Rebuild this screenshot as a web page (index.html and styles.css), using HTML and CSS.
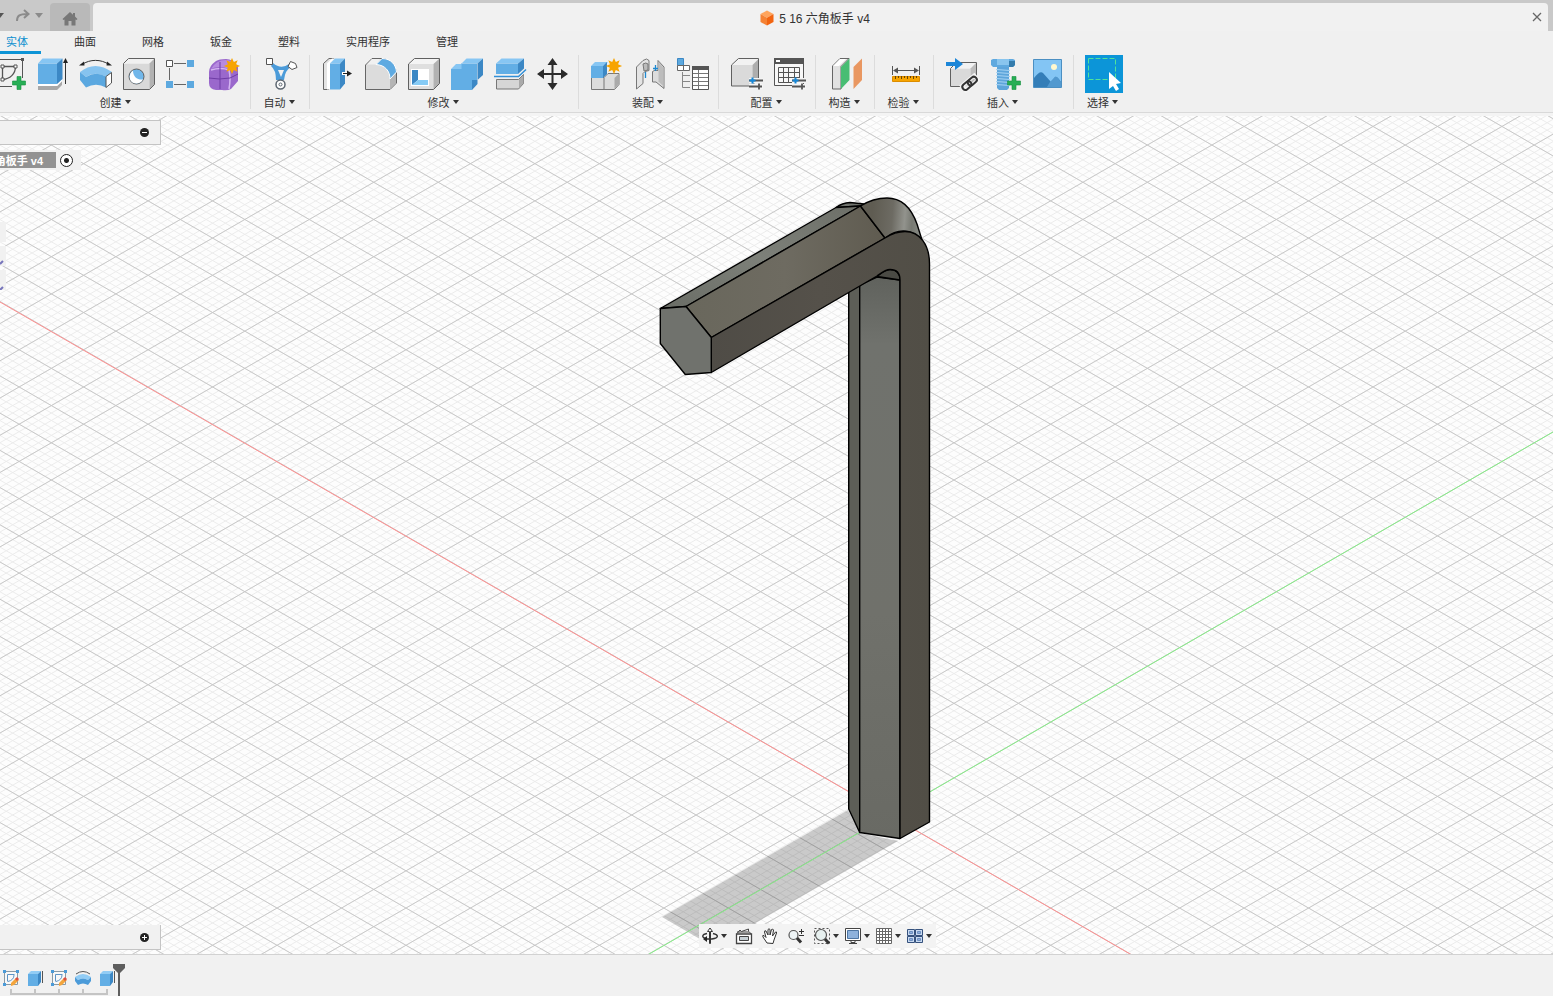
FILE: index.html
```html
<!DOCTYPE html>
<html lang="zh-CN">
<head>
	<meta charset="UTF-8">
	<title>5 16 六角板手 v4</title>
	<link rel="stylesheet" href="styles.css">
</head>
<body>
<svg class="defs" width="0" height="0" aria-hidden="true">
	<defs>
		<symbol id="star" viewBox="-10 -10 20 20"><path fill="#f7a400" d="M0-9 2-4.5 6.3-6.3 4.5-2 9 0 4.500 2 6.300 6.300 2 4.500 0 9-2 4.500-6.300 6.300-4.500 2-9 0-4.500-2-6.300-6.300-2-4.500z"/></symbol>
		<symbol id="plus" viewBox="0 0 14 14"><path fill="#27ae55" stroke="#159040" stroke-width=".6" d="M5 .5h4V5h4.500v4H9v4.500H5V9H.500V5H5z"/></symbol>
		<symbol id="sliders" viewBox="0 0 16 14"><path fill="none" stroke="#f4f4f4" stroke-width="5" d="M1 4.500h14M1 10.500h14"/><path fill="none" stroke="#555" stroke-width="1.800" d="M1 4.500h14M1 10.500h13M11 7.500v6"/><path fill="none" stroke="#1587d8" stroke-width="2" d="M1.500 4.500h6M4.500 1.500v6"/></symbol>
	</defs>
</svg>
<div class="app">
	<!-- 标题栏 -->
	<header class="titlebar">
		<div class="quick">
			<button class="drop dark" aria-label="撤消列表"></button>
			<button class="redo" aria-label="重做"><svg width="14" height="13" viewBox="0 0 14 13"><path fill="none" stroke="#8b8b8b" stroke-width="2" d="M1 12C1 6.500 4 5 11 5M8 1l4.500 4L8 9"/></svg></button>
			<button class="drop" aria-label="重做列表"></button>
		</div>
		<button class="home" aria-label="主页"><svg width="16" height="14" viewBox="0 0 16 14"><path fill="#777" d="M8 0 11 2.800V1h2v3.500l2.500 2.500-1 1-1-.6V13.500H9.500V9h-3v4.500h-4V7.400l-1 .6-1-1z"/></svg></button>
		<div class="doc">
			<h1 class="doc-title">
				<svg width="14" height="16" viewBox="0 0 14 16"><path fill="#ffa45c" d="M7 .5 13.500 4 7 7.800.500 4z"/><path fill="#f58233" d="M.500 4 7 7.800V15.500L.500 12z"/><path fill="#f26410" d="M13.500 4 7 7.800V15.500L13.500 12z"/></svg>
				<span>5 16 六角板手 v4</span>
			</h1>
			<button class="close" aria-label="关闭"><svg width="10" height="10" viewBox="0 0 10 10"><path stroke="#666" stroke-width="1.300" d="M1 1l8 8M9 1 1 9"/></svg></button>
		</div>
	</header>

	<!-- 功能区选项卡 -->
	<nav class="tabs">
		<button class="tab active">实体</button>
		<button class="tab">曲面</button>
		<button class="tab">网格</button>
		<button class="tab">钣金</button>
		<button class="tab">塑料</button>
		<button class="tab">实用程序</button>
		<button class="tab">管理</button>
	</nav>

	<!-- 功能区 -->
	<div class="ribbon">
		<section class="group">
			<div class="icons">
				<button class="tool" aria-label="创建草图"><svg viewBox="0 0 32 32"><g fill="none" stroke="#555"><path d="M5 1.500h24.500V20M5 1.500v27h14"/><path stroke-width="1.300" d="M9.500 8.500h13M9.500 8.500v13M22.500 8.500C22.500 16 17 21 9.500 21.500"/></g><path fill="#555" d="M28 0h3v3h-3z"/><path fill="#fff" stroke="#555" d="M8 7h3v3H8zM21 7h3v3h-3zM8 20h3v3H8z"/><use href="#plus" x="19" y="18" width="14" height="14"/></svg></button>
				<button class="tool" aria-label="拉伸"><svg viewBox="0 0 32 32"><path fill="#a8a8a8" d="M2 28h19l5-5v4l-5 5H2z"/><path fill="#fff" d="M2 26h19l5-5v2l-5 5H2z"/><path fill="#62aee5" d="M2 5.500h19V26H2z"/><path fill="#87c6f3" d="M2 5.500 6.500.500h20L21 5.500z"/><path fill="#3c88c5" d="m21 5.500 5.500-5v20.500L21 26z"/><path stroke="#333" d="M29.500 3v23"/><path fill="#222" d="m29.500 0 2.500 5h-5z"/></svg></button>
				<button class="tool" aria-label="旋转"><svg viewBox="0 0 32 32"><path fill="none" stroke="#333" d="M3 6.500C11 1 22 1 30 6.500"/><path fill="#222" d="m0 7.500 5-4 .500 4zM33 7.500l-5-4-.500 4z"/><path fill="#86c3ef" d="M1 14Q16 2 33 14l-6 4.500Q16 13 7 19z"/><path fill="#5ba8e0" d="M1 14 7 19v10.500L1 22zM7 19q10-6 20-.500V29.500q-10-5.500-20 0z"/><path fill="#fff" stroke="#555" d="m27 18.500 5.500-4V25L27 29.500z"/></svg></button>
				<button class="tool" aria-label="孔"><svg viewBox="0 0 32 32"><path fill="#d9d9d9" d="M1.500 5.500h26v26h-26z"/><path fill="#f1f1f1" d="m1.500 5.500 5-5h26l-5 5z"/><path fill="#b2b2b2" d="m27.500 5.500 5-5v26l-5 5z"/><path fill="none" stroke="#606060" d="M1.500 5.500 6.500.500h26v26l-5 5h-26z"/><circle cx="14.500" cy="18.500" r="7.500" fill="#71b7ea" stroke="#606060"/><path fill="#fff" d="M11 12.500c0 6 4 9.500 10 9-2 4-7 5-10.500 3C6.500 22 7 15 11 12.500z"/></svg></button>
				<button class="tool" aria-label="矩形阵列"><svg viewBox="0 0 32 32"><path fill="none" stroke="#666" d="M9 5.500h12M4.500 10v12M9 26.500h12"/><path fill="#fff" stroke="#555" d="M1.500 2.500h6v6h-6z"/><path fill="#5da9df" d="M22 2h7v7h-7zM1 23h7v7H1zM22 23h7v7h-7z"/></svg></button>
				<button class="tool" aria-label="创建形状"><svg viewBox="0 0 32 32"><path fill="#9a68cc" d="M1 14Q1 8 8 3q3-2 10-2 7 0 12 8v14l-7 8q-4 2-9 1H8Q1 31 1 25z"/><path fill="#b78ae0" d="M3 11Q8 2 18 2q6 0 8 4l-4 5Q10 7 3 11z"/><path fill="none" stroke="#d4b5f2" stroke-width="1.500" d="M3 12q10-3 18 0l6-6M21 12q2 9 0 19"/><path fill="none" stroke="#6e3ca5" d="M1 20q10 2 21 0l8-4M12 4v27"/><use href="#star" x="15" y="-1" width="18" height="18"/></svg></button>
			</div>
			<button class="label">创建</button>
		</section>
		<section class="group">
			<div class="icons">
				<button class="tool" aria-label="自动"><svg viewBox="0 0 32 32"><path fill="#4b9bd9" d="M8 5q8 7 16 1l2 3q-6 3-7 13h-8Q11 12 6 8z"/><path fill="#f1f1f1" d="M13 12h6l-3 7z"/><circle cx="15.500" cy="26.500" r="4.500" fill="#fff" stroke="#5c6670" stroke-width="1.500"/><circle cx="15.500" cy="26.500" r="1.500" fill="none" stroke="#5c6670"/><path fill="#fff" stroke="#555" d="M1.500.500h6v6h-6zM25.500 3.500l5 2 1.500 4-5 2-4-3z"/></svg></button>
			</div>
			<button class="label">自动</button>
		</section>
		<section class="group">
			<div class="icons">
				<button class="tool" aria-label="按拉"><svg viewBox="0 0 32 32"><path fill="#e4e4e4" stroke="#666" d="M2.500 5.500 8 .500h5l-5 5v26H2.500z"/><path fill="#fff" d="M6 5.500 11 .500h3l-5 5v26H6z"/><path fill="#62aee5" d="M9 5.500h10v26H9z"/><path fill="#87c6f3" d="m9 5.500 5-5h10l-5 5z"/><path fill="#3c88c5" d="m19 5.500 5-5v25l-5 6z"/><path stroke="#fff" stroke-width="3" d="M21 15.500h5"/><path stroke="#222" d="M22 15.500h7"/><path fill="#222" d="m31 15.500-5-3v6z"/></svg></button>
				<button class="tool" aria-label="圆角"><svg viewBox="0 0 32 32"><path fill="#dcdcdc" stroke="#666" d="M1.500 7 8 .500h10C26 1 32 8 32.500 15v10L26 31.500H1.500z"/><path fill="#b5b5b5" d="m26 21 6-6v10l-6 6z"/><path fill="#f1f1f1" d="M3 6.500 8 1h8l-4 5.500z"/><path fill="#5faae1" stroke="#fff" d="M12 6.500 18 .500C27 .500 32 7 32.500 14L26 21C26 13 21 7 12 6.500z"/></svg></button>
				<button class="tool" aria-label="抽壳"><svg viewBox="0 0 32 32"><path fill="#dfdfdf" d="M1.500 6h25v25.500h-25z"/><path fill="#f4f4f4" d="m1.500 6 6-5.500h25L26.500 6z"/><path fill="#b2b2b2" d="m26.500 6 6-5.500v25l-6 6z"/><path fill="none" stroke="#606060" d="M1.500 6 7.500.500h25v25l-6 6h-25z"/><path fill="#fff" d="M4 11h18v17H4z"/><path fill="#3c88c5" d="M5 12h6v10l-6 5z"/><path fill="#86cbf5" d="m5 27 6-5h10v5z"/></svg></button>
				<button class="tool" aria-label="合并"><svg viewBox="0 0 32 32"><path fill="#62aee5" d="M1 11h10V5.500h16V22h-5v10H1z"/><path fill="#87c6f3" d="m1 11 5-5h5.500v5zM11.500 5.500l5-5H33l-5.500 5z"/><path fill="#3c88c5" d="m27.500 5.500 5.500-5V17l-5.500 5zM22 22h5.500v4L22 32z"/></svg></button>
				<button class="tool" aria-label="分割实体"><svg viewBox="0 0 32 32"><path fill="#62aee5" d="M3 5.500h22V16H3z"/><path fill="#87c6f3" d="m3 5.500 5.500-5H31l-6 5z"/><path fill="#3c88c5" d="m25 5.500 6-5v10L25 16z"/><path fill="none" stroke="#318fd7" stroke-width="1.500" d="M1 18.500h24.500l7.500-7"/><path fill="#d6d6d6" stroke="#777" d="M3.500 21.500h22l5-5v9l-5 5.500h-22z"/><path fill="#aaa" d="m26 21.500 4.500-4.500v8L26 30z"/></svg></button>
				<button class="tool" aria-label="移动/复制"><svg viewBox="0 0 32 32"><path stroke="#2b2b2b" stroke-width="2" d="M16.500 3v26M4 16h26"/><path fill="#2b2b2b" d="m16.500 0 5 7h-10zM16.500 32l5-7h-10zM1 16l7-5v10zM32 16l-7-5v10z"/></svg></button>
			</div>
			<button class="label">修改</button>
		</section>
		<section class="group">
			<div class="icons">
				<button class="tool" aria-label="新建零部件"><svg viewBox="0 0 32 32"><path fill="#dcdcdc" stroke="#777" d="M1.500 19.500h12.500l4-4h11v11l-4.500 5h-23zM14 19.500v12"/><path fill="#aaa" d="m24.500 20 4-4v10l-4 5z"/><path fill="#62aee5" d="M1 8h12v12H1z"/><path fill="#87c6f3" d="m1 8 4-4h13l-5 4z"/><path fill="#3c88c5" d="m13 8 4-4v12l-4 4z"/><use href="#star" x="15" y="-1" width="18" height="18"/></svg></button>
				<button class="tool" aria-label="联接"><svg viewBox="0 0 32 32"><path fill="#e4e4e4" stroke="#777" d="M3.500 9 10 2.500q4-3 6 0v10l-4 1-2 2v10L3.500 31z"/><path fill="#bbb" stroke="#777" d="M10 6q3-2 5 0v6l-4 1z"/><path fill="#ddd" stroke="#777" d="m25 2.500 6 6.500v21.500L23 24h-3.500V13.500q2-2 5.500-1z"/><path fill="#bdbdbd" d="m25.500 4 5 5.500v19l-5-5z"/><path fill="none" stroke="#1e88d0" stroke-width="1.300" d="M12.500 20v-6M22.500 7v6M20 10.500h5"/></svg></button>
				<button class="tool" aria-label="零部件明细"><svg viewBox="0 0 32 32"><path fill="#5da9df" stroke="#3c88c5" d="M1.500.500h6v7h-6z"/><path fill="#fff" stroke="#666" d="M1.500 7.500h6v5h-6zM7.500 7.500h6v5h-6z"/><path fill="none" stroke="#888" d="M6.500 14v15.500H14M7 17.500h7M7 23.500h7"/><path fill="#fff" stroke="#555" d="M16.500 9.500h16v22h-16z"/><path fill="#555" d="M16 8h17v4H16z"/><path stroke="#777" d="M17 15.500h15M17 19.500h15M17 23.500h15M17 27.500h15M22.500 12v19"/></svg></button>
			</div>
			<button class="label">装配</button>
		</section>
		<section class="group">
			<div class="icons">
				<button class="tool" aria-label="创建配置"><svg viewBox="0 0 32 32"><path fill="#dadada" d="M1.500 7h21v21h-21z"/><path fill="#f2f2f2" d="m1.500 7 7-6.500h20L22.500 7z"/><path fill="#adadad" d="m22.500 7 6-6v20l-6 7z"/><path fill="none" stroke="#606060" d="M22 28H1.500V7L8.500.500h20V20"/><use href="#sliders" x="18" y="18" width="16" height="14"/></svg></button>
				<button class="tool" aria-label="配置表"><svg viewBox="0 0 32 32"><path fill="#f8f8f8" stroke="#555" d="M1.500.500h29v27h-29z"/><path fill="#555" d="M1 0h30v6H1z"/><path fill="#fff" d="M3 2h4v2H3z"/><path fill="none" stroke="#555" d="M5.500 9.500h21v15h-21zM5 14.500h21M5 19.500h21M10.500 10v14M15.500 10v14M21.500 10v14"/><use href="#sliders" x="18" y="18" width="16" height="14"/></svg></button>
			</div>
			<button class="label">配置</button>
		</section>
		<section class="group">
			<div class="icons">
				<button class="tool" aria-label="偏移平面"><svg viewBox="0 0 32 32"><path fill="#e2e2e2" stroke="#666" d="M2.500 8 10 .500h9L11 8.500V31H2.500z"/><path fill="#fff" d="m3 8 7-7h6L9 8z"/><path fill="#48bd73" d="m11 9 8.500-8.500V22L11 31z"/><path fill="#e99761" d="m23.500 9 8.500-8.500V22l-8.500 9z"/></svg></button>
			</div>
			<button class="label">构造</button>
		</section>
		<section class="group">
			<div class="icons">
				<button class="tool" aria-label="测量"><svg viewBox="0 0 32 32"><path stroke="#555" d="M3.500 8v9M30.500 8v9M5 12.500h24"/><path fill="#555" d="m4 12.500 5-3v6zM30 12.500l-5-3v6z"/><path fill="#f7a400" stroke="#dc8d00" d="M3.500 18.500h27v5h-27z"/><path stroke="#694500" d="M6.500 18v3M9.500 18v2M12.500 18v3M15.500 18v2M18.500 18v3M21.500 18v2M24.500 18v3M27.500 18v2"/></svg></button>
			</div>
			<button class="label">检验</button>
		</section>
		<section class="group">
			<div class="icons">
				<button class="tool" aria-label="插入衍生"><svg viewBox="0 0 32 32"><path fill="#dadada" d="M5.500 10.500h20v18h-20z"/><path fill="#f2f2f2" d="m5.500 10.500 6-6h20l-6 6z"/><path fill="#bdbdbd" d="m25.500 10.500 6-6v18l-6 6z"/><path fill="none" stroke="#606060" d="M18 28.500H5.500v-18l6-6h20V18"/><path fill="#1c86d8" d="M1 4h9V0l8 6-8 6V8H1z"/><g transform="rotate(-40 25 25)" fill="none"><path stroke="#f5f5f5" stroke-width="4" d="M17 22h8v6h-8zM24 22h9v6h-9z"/><rect x="16" y="22" width="10" height="6" rx="3" stroke="#333" stroke-width="2"/><rect x="23" y="22" width="10" height="6" rx="3" stroke="#333" stroke-width="2"/></g></svg></button>
				<button class="tool" aria-label="插入紧固件"><svg viewBox="0 0 32 32"><path fill="#5da5db" d="M9 8h12v22l-2 2h-8l-2-2z"/><path stroke="#a7d4f4" d="M8 11.500l14 1M8 14.500l14 1M8 17.500l14 1M8 20.500l14 1M8 23.500l14 1M8 26.500l14 1"/><path fill="#5fa9df" d="M3 2 5 1h20l2 1v5l-2 2H5L3 7z"/><path fill="#89c5ee" d="M9 1h12v6H9z"/><path fill="#347cac" d="M21 3h6v4l-2 2h-4z"/><use href="#plus" x="19" y="18" width="14" height="14"/></svg></button>
				<button class="tool" aria-label="贴图"><svg viewBox="0 0 32 32"><path fill="#83c5f4" stroke="#4b8fc2" d="M2.500 1.500h28v28h-28z"/><circle cx="23" cy="9" r="3" fill="#fff8cf"/><path fill="#347eb8" d="M3 20q6-8 9-5l8 9 4-5q2-1 6 5v5H3z"/><path fill="#5299cf" d="M16 29q3-6 8-10 2-1 6 5v5z"/></svg></button>
			</div>
			<button class="label">插入</button>
		</section>
		<section class="group">
			<div class="icons">
				<button class="tool select" aria-label="选择"><svg viewBox="0 0 38 38"><path fill="none" stroke="#51e39b" stroke-dasharray="5 2" d="M3.500 3.500h27v21h-27z"/><path fill="#fff" d="M24 17v17l4-3 3 5 3-2-3-5 5-1z"/></svg></button>
			</div>
			<button class="label">选择</button>
		</section>
	</div>

	<!-- 画布 -->
	<main class="viewport">
		<svg class="scene" viewBox="0 116 1553 838" preserveAspectRatio="xMidYMid slice">
			<defs>
				<linearGradient id="gTop" x1="0" y1="1" x2="1" y2="0"><stop offset="0" stop-color="#6a6d66"/><stop offset=".5" stop-color="#7d8079"/><stop offset="1" stop-color="#6d6f68"/></linearGradient>
				<linearGradient id="gFace" x1="0" y1="0" x2="1" y2="0"><stop offset="0" stop-color="#69675c"/><stop offset=".5" stop-color="#6e6b61"/><stop offset="1" stop-color="#5f5b50"/></linearGradient>
				<linearGradient id="gBend" gradientUnits="userSpaceOnUse" x1="872" y1="218" x2="922" y2="222"><stop offset="0" stop-color="#5f5c52"/><stop offset=".4" stop-color="#6d6b63"/><stop offset=".65" stop-color="#92938d"/><stop offset=".8" stop-color="#777972"/><stop offset="1" stop-color="#8b8e88"/></linearGradient>
				<linearGradient id="gSide" gradientUnits="userSpaceOnUse" x1="711" y1="0" x2="930" y2="0"><stop offset="0" stop-color="#4f4c46"/><stop offset=".5" stop-color="#55514a"/><stop offset="1" stop-color="#514e46"/></linearGradient>
				<linearGradient id="gShaft" x1="0" y1="0" x2="0" y2="1"><stop offset="0" stop-color="#60625d"/><stop offset=".12" stop-color="#70726d"/><stop offset=".6" stop-color="#70716b"/><stop offset="1" stop-color="#696a64"/></linearGradient>
			</defs>
			<path id="minor" class="minor"/>
			<path id="major" class="major"/>
			<path class="shadow" d="M848 810 662 917 705 942 726 940 898 841 860 833z"/>
			<path class="axis-x" d="M0 302 1553 1198"/>
			<path class="axis-y" d="M0 1329 1553 432"/>
			<g class="model">
				<path fill="#5d5e57" d="M848.700 290 859.700 285V832.500L848.700 809z"/>
				<path fill="url(#gShaft)" d="M859.700 285 877 277 900 280V838.500L859.700 832.500z"/>
				<path fill="#4a4a44" d="M877 276.500C880 274 885 269.500 890 269.500 896 269.500 900 272 900 280z"/>
				<path fill="#70736d" d="M836 207.500Q842 203 850 202.500L864 204 860.500 206z"/>
				<path fill="url(#gTop)" d="M660.300 308.500 836 207.500 860.500 206 686 306.500z"/>
				<path fill="url(#gFace)" d="M686 306.500 860.500 206 885 238 711.300 337.500z"/>
				<path fill="url(#gBend)" d="M860.500 206C870 200 880 198 887 198 903 198 912 210 917 224L922 240Q905 223 885 238z"/>
				<path fill="url(#gSide)" d="M711.300 337.500 885 238C893 233 900 231.500 905 231.500 920 231.500 929.500 245 929.500 264V822L900 838.500V280C900 272 896 269.500 890 269.500 885 269.500 880 274 877 276L711.300 372.500z"/>
				<path fill="#70726d" d="M660.300 308.500 686 306.500 711.300 337.500V372.500L685.300 374.500 660.300 343.500z"/>
			</g>
		</svg>

		<div class="browser">
			<button class="round" aria-label="折叠浏览器"><svg width="9" height="9" viewBox="0 0 9 9"><circle cx="4.500" cy="4.500" r="4.500" fill="#222"/><path stroke="#fff" d="M2 4.500h5"/></svg></button>
		</div>
		<div class="node">
			<span class="node-name"><b>角板手 v4</b></span>
			<input type="radio" class="node-radio" aria-label="激活 5 16 六角板手 v4" checked>
		</div>
		<div class="side">
			<i></i>
			<i><svg width="6" height="20" viewBox="0 0 6 20"><path fill="none" stroke="#7775bb" stroke-width="2" d="M0 18 3 15"/></svg></i>
			<i><svg width="6" height="20" viewBox="0 0 6 20"><path fill="none" stroke="#7775bb" stroke-width="2" d="M0 20 3 17"/></svg></i>
		</div>
		<div class="comments">
			<button class="round" aria-label="展开注释"><svg width="9" height="9" viewBox="0 0 9 9"><circle cx="4.500" cy="4.500" r="4.500" fill="#222"/><path stroke="#fff" d="M2 4.500h5M4.500 2v5"/></svg></button>
		</div>

		<!-- 导航栏 -->
		<div class="navbar">
			<button class="has-drop" aria-label="动态观察"><svg width="18" height="18" viewBox="0 0 18 18"><path fill="none" stroke="#333" stroke-width="1.300" d="M6 6.500C1 7.500 0 10 5 11.500M12 6.500c6 1.500 6 4.500-1 5.500H5"/><path fill="#fff" stroke="#333" d="M8.500 16.500v-12H6.500L9 1l2.500 3.500h-2v12z"/><path fill="#222" d="m2 12 4-3v6z"/></svg></button>
			<button aria-label="观察方向"><svg width="18" height="18" viewBox="0 0 18 18"><path fill="#fff" stroke="#444" stroke-width="1.300" d="M1.500 7h15v9.500h-15z"/><path fill="none" stroke="#444" d="M2 6.500 5 3l1.500 1.500 7-2.500v2.500M2 5h12.500L16 7"/><path fill="#c8d1d6" stroke="#444" d="M4.500 9.500h9v4h-9z"/></svg></button>
			<button aria-label="平移"><svg width="18" height="18" viewBox="0 0 18 18"><path fill="#fff" stroke="#333" d="M6 16 2 10q-1-2 1-1.500l2 2L3.500 5q0-2 1.500-1l2 4V2.500q1-1.500 2 0V8l1.500-5.500q1.500-1 2 .500L11.500 9l3-4q1.500-.500 1 1L13 13l-1 3.500z"/></svg></button>
			<button aria-label="缩放"><svg width="18" height="18" viewBox="0 0 18 18"><circle cx="6.500" cy="8" r="4.500" fill="#eef4f6" stroke="#555" stroke-width="1.200"/><path stroke="#333" stroke-width="3" d="m10 11 4 4.500"/><path stroke="#333" d="M12 4.500h5M14.500 2v5M12 8.500h5"/></svg></button>
			<button class="has-drop" aria-label="窗口缩放"><svg width="18" height="18" viewBox="0 0 18 18"><path fill="none" stroke="#555" stroke-dasharray="2 2" d="M1.500 1.500h15v15h-15z"/><circle cx="8" cy="8" r="5.500" fill="#e8f1f0" stroke="#555" stroke-width="1.200"/><path stroke="#333" stroke-width="3" d="m12 12 4 4.500"/></svg></button>
			<button class="has-drop" aria-label="显示设置"><svg width="18" height="18" viewBox="0 0 18 18"><path fill="#fff" stroke="#444" d="M1.500 1.500h15v12h-15z"/><path fill="#8db1dc" stroke="#4d75a3" d="M3.500 3.500h11v8h-11z"/><path fill="#fff" stroke="#444" d="M7 13.500h4v2H7zM5 16.500h8"/></svg></button>
			<button class="has-drop" aria-label="栅格和捕捉"><svg width="18" height="18" viewBox="0 0 18 18"><path fill="#fff" stroke="#666" d="M1.500 1.500h15v15h-15zM4.500 1v16M7.500 1v16M10.500 1v16M13.500 1v16M1 4.500h16M1 7.500h16M1 10.500h16M1 13.500h16"/></svg></button>
			<button class="has-drop" aria-label="视口"><svg width="18" height="18" viewBox="0 0 18 18"><path fill="#c9daf1" stroke="#35517d" d="M1.500 2.500h7v6h-7zM9.500 2.500h7v6h-7zM1.500 9.500h7v6h-7zM9.500 9.500h7v6h-7z"/><path fill="#8fb0de" stroke="#6d8fc0" d="M3.500 4.500h3v2h-3zM11.500 4.500h3v2h-3zM3.500 11.500h3v2h-3zM11.500 11.500h3v2h-3z"/></svg></button>
		</div>
	</main>

	<!-- 时间轴 -->
	<footer class="timeline">
		<button class="step" aria-label="草图1"><svg viewBox="0 0 16 16"><path fill="#f8f8f8" stroke="#8a9aa5" d="M1.500 1.500h13v13h-13z"/><path fill="none" stroke="#5d94c5" d="M4.500 4.500h7M4.500 4.500v7M11 5q0 5-6 6.500"/><path fill="#4b9bd9" d="M0 0h3v3H0zM13 0h3v3h-3zM0 13h3v3H0z"/><path fill="#f3a53d" d="m8 13 5-5 3 2-5 5-3 1z"/><path fill="#dc4c42" d="m12 9 2-2 2 2-2 2z"/></svg></button>
		<button class="step" aria-label="拉伸1"><svg viewBox="0 0 16 16"><path fill="#62aee5" d="M1 4h10v12H1z"/><path fill="#91ccf5" d="m1 4 3-3h10l-3 3z"/><path fill="#3c88c5" d="m11 4 3-3v11l-3 4z"/><path stroke="#555" d="M15.500 1v12"/></svg></button>
		<button class="step" aria-label="草图2"><svg viewBox="0 0 16 16"><path fill="#f8f8f8" stroke="#8a9aa5" d="M1.500 1.500h13v13h-13z"/><path fill="none" stroke="#5d94c5" d="M4.500 4.500h7M4.500 4.500v7M11 5q0 5-6 6.500"/><path fill="#4b9bd9" d="M0 0h3v3H0zM13 0h3v3h-3zM0 13h3v3H0z"/><path fill="#f3a53d" d="m8 13 5-5 3 2-5 5-3 1z"/><path fill="#dc4c42" d="m12 9 2-2 2 2-2 2z"/></svg></button>
		<button class="step" aria-label="旋转1"><svg viewBox="0 0 16 16"><path fill="none" stroke="#555" d="M1 4q7-5 14 0"/><path fill="#91ccf5" d="M0 7q8-6 16 0l-3 3q-5-3-10 0z"/><path fill="#4b9bd9" d="m0 7 3 3q5-3 10 0l3-3v4l-3 4q-5-3-10 0l-3-4z"/></svg></button>
		<button class="step last" aria-label="拉伸2"><svg viewBox="0 0 16 16"><path fill="#62aee5" d="M1 4h10v12H1z"/><path fill="#91ccf5" d="m1 4 3-3h10l-3 3z"/><path fill="#3c88c5" d="m11 4 3-3v11l-3 4z"/><path stroke="#555" d="M15.500 1v12"/></svg></button>
		<svg class="marker" width="12" height="32" viewBox="0 0 12 32"><path fill="#5e5e5e" d="M0 0h12v4L7 9v23H5V9L0 4z"/></svg>
	</footer>
</div>
<script src="grid.js"></script>
</body>
</html>
```

FILE: styles.css
```css
*,
*::after {
	box-sizing: border-box;
}
body {
	margin: 0;
	font-family: "Liberation Sans", "Noto Sans CJK SC", sans-serif;
	font-size: 11px;
	color: #333;
	background: #f0f0f0;
}
button {
	display: flex;
	align-items: center;
	justify-content: center;
	margin: 0;
	padding: 0;
	border: none;
	background: none;
	font: inherit;
	color: inherit;
}
svg {
	display: block;
}
.defs {
	position: absolute;
}
.app {
	display: flex;
	flex-direction: column;
	height: 100vh;
	overflow: hidden;
}

/* 标题栏 */
.titlebar {
	display: flex;
	flex: none;
	height: 31px;
	padding: 3px 5px 0 0;
	background: #c9c9c9;
}
.quick {
	display: flex;
	align-items: center;
	width: 50px;
	padding-bottom: 4px;
}
.drop {
	border: 4px solid transparent;
	border-top: 5px solid #8b8b8b;
	border-bottom: 0;
}
.drop.dark {
	margin-left: -4px;
	border-top-color: #555;
}
.redo {
	margin: 0 5px 0 12px;
}
.home {
	width: 40px;
	margin-right: 3px;
	padding-top: 3px;
	border-radius: 4px 4px 0 0;
	background: #b9b9b9;
}
.doc {
	display: flex;
	flex: 1;
	align-items: center;
	border-radius: 4px 4px 0 0;
	background: #f1f1f1;
}
.doc-title {
	display: flex;
	flex: 1;
	align-items: center;
	justify-content: center;
	gap: 5px;
	margin: 0;
	padding: 1px 0 0 10px;
	font-size: 12px;
	font-weight: normal;
}
.close {
	width: 20px;
	height: 20px;
	margin-right: 1px;
}

/* 选项卡 */
.tabs {
	display: flex;
	flex: none;
	gap: 20px;
	height: 23px;
	margin-left: -7px;
}
.tab {
	padding: 0 13px;
	border-bottom: 3px solid transparent;
}
.active {
	color: #0d8fcf;
	border-bottom-color: #0d94d6;
}

/* 功能区 */
.ribbon {
	display: flex;
	flex: none;
	height: 62px;
	margin-left: -18px;
	border-bottom: 3px solid #f4f4f4;
	box-shadow: inset 0 -1px #d9d9d9;
}
.group {
	display: flex;
	flex-direction: column;
	align-items: center;
	min-width: 59px;
	height: 54px;
	margin-top: 1px;
	padding: 0 10px 0 11px;
	border-right: 1px solid #dcdcdc;
}
.group:last-child {
	border-right: none;
}
.icons {
	display: flex;
	flex: none;
	align-items: center;
	gap: 11px;
	height: 38px;
}
.tool {
	width: 32px;
	height: 32px;
}
.tool svg {
	width: 100%;
	height: 100%;
	overflow: visible;
}
.select {
	width: 38px;
	height: 38px;
	background: #0c95d8;
}
.label {
	flex: none;
	height: 18px;
	gap: 3px;
	padding-right: 3px;
	white-space: nowrap;
}
.label::after,
.has-drop::after {
	content: "";
	border: 3px solid transparent;
	border-top: 4px solid #333;
	border-bottom: 0;
}

/* 画布 */
.viewport {
	position: relative;
	flex: 1;
	min-height: 0;
	overflow: hidden;
	background: #fdfdfd;
}
.scene {
	width: 100%;
	height: 100%;
}
.minor,
.major {
	fill: none;
	stroke: #ececec;
}
.major {
	stroke: #c9c9c9;
}
.shadow {
	fill: #000;
	fill-opacity: .2;
}
.axis-x {
	stroke: #ff8f8f;
}
.axis-y {
	stroke: #86ee86;
}
.model path {
	stroke: #000;
	stroke-width: 1.4;
	stroke-linejoin: round;
}
.browser,
.comments {
	position: absolute;
	left: 0;
	top: 4px;
	display: flex;
	align-items: center;
	justify-content: flex-end;
	width: 161px;
	height: 25px;
	padding-right: 11px;
	border: 1px solid #c4c4c4;
	border-left: none;
	background: #f1f1f1;
}
.comments {
	top: auto;
	bottom: 4px;
	border-top: none;
}
.node {
	position: absolute;
	left: 0;
	top: 34px;
	display: flex;
	align-items: center;
	gap: 4px;
	width: 81px;
	height: 20px;
	background: #f1f1f1;
}
.node-name {
	display: flex;
	align-items: center;
	justify-content: flex-end;
	width: 56px;
	height: 16px;
	padding-right: 13px;
	overflow: hidden;
	white-space: nowrap;
	color: #fff;
	background: #929292;
}
.node-radio {
	appearance: none;
	width: 13px;
	height: 13px;
	margin: 0;
	border: 1px solid #222;
	border-radius: 50%;
	background: radial-gradient(circle, #222 2px, #fff 3px);
}
.side {
	position: absolute;
	left: 0;
	top: 106px;
	display: flex;
	flex-direction: column;
	gap: 4px;
}
.side i {
	width: 6px;
	height: 20px;
	background: #f1f1f1;
}
.navbar {
	position: absolute;
	left: 45%;
	bottom: 6px;
	display: flex;
	align-items: center;
	gap: 8px;
	height: 24px;
	padding: 0 4px 0 2px;
	background: #f3f3f3;
}
.has-drop {
	gap: 2px;
}
.has-drop + .has-drop {
	margin-left: -3px;
}

/* 时间轴 */
.timeline {
	display: flex;
	flex: none;
	gap: 8px;
	height: 42px;
	padding: 9px 0 0 3px;
	border-top: 1px solid #d2d2d2;
	background: #f1f1f1;
}
.step {
	flex-direction: column;
	justify-content: flex-start;
	width: 16px;
	padding-top: 6px;
}
.step svg {
	flex: none;
	width: 16px;
	height: 16px;
}
.step::after {
	content: "";
	flex: none;
	width: 24px;
	height: 6px;
	margin-top: 3px;
	border-bottom: 2px solid #c4c4c4;
	background: linear-gradient(#c4c4c4, #c4c4c4) center / 2px 100% no-repeat;
}
.step:first-child::after {
	align-self: flex-start;
	width: 13px;
	margin-left: 7px;
	background-position: left;
}
.step.last::after {
	align-self: flex-start;
	width: 13px;
	margin-left: -4px;
	background-position: right;
}
.marker {
	margin-left: -10px;
}
```

FILE: grid.js
```js
// 等轴测栅格，原点在 (889.5, 815)
function gridPath(w, h) {
	var d = "";
	var k = h / w;
	for (var i = -250; i <= 250; i++) {
		var y = 815 + i * h;
		d += "M0 " + (y - 889.5 * k) + "L1553 " + (y + 663.5 * k);
		d += "M0 " + (y + 889.5 * k) + "L1553 " + (y - 663.5 * k);
	}
	return d;
}
document.getElementById("minor").setAttribute("d", gridPath(12.894, 7.444));
document.getElementById("major").setAttribute("d", gridPath(64.47, 37.22));
```
